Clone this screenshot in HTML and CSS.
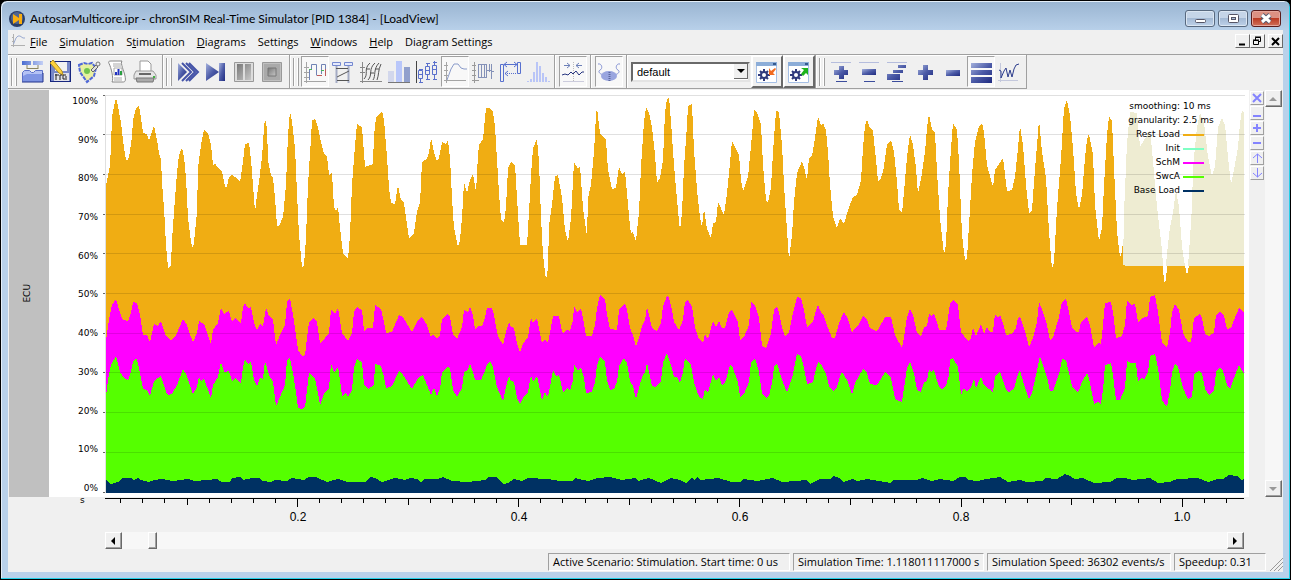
FILE: index.html
```html
<!DOCTYPE html>
<html lang="en">
<head>
    <meta charset="UTF-8">
    <meta name="viewport" content="width=device-width, initial-scale=1.0">
    <title>AutosarMulticore.ipr - chronSIM Real-Time Simulator</title>
    <link rel="stylesheet" href="styles.css">
</head>
<body>

<svg class="defs" width="0" height="0" aria-hidden="true">
    <defs>
        <linearGradient id="blue" x1="0" y1="0" x2="1" y2="1">
            <stop offset="0" stop-color="#a3b0dc"/><stop offset=".5" stop-color="#4d5ca8"/><stop offset="1" stop-color="#1f2b80"/>
        </linearGradient>
        <linearGradient id="gray" x1="0" y1="0" x2="1" y2="1">
            <stop offset="0" stop-color="#777"/><stop offset="1" stop-color="#c8c8c8"/>
        </linearGradient>
        <linearGradient id="sky" x1="0" y1="0" x2="1" y2="0">
            <stop offset="0" stop-color="#4a6cd0"/><stop offset="1" stop-color="#c3cff5"/>
        </linearGradient>
    </defs>
</svg>

<div class="window">
    <header class="titlebar">
        <svg width="16" height="16" viewBox="0 0 16 16"><circle cx="8" cy="8" r="8" fill="#2c3f66"/><circle cx="8" cy="7" r="6" fill="#4f6590"/><path d="M4 3l6 4V3h3v10h-3V9l-6 4z" fill="#f8ae10"/></svg>
        <h1>AutosarMulticore.ipr - chronSIM Real-Time Simulator [PID 1384] - [LoadView]</h1>
        <button class="win-btn" aria-label="Minimize"><svg width="28" height="15"><rect x="9.500" y="8.500" width="10" height="3" rx="1" fill="#fff" stroke="#556"/></svg></button>
        <button class="win-btn" aria-label="Maximize"><svg width="28" height="15"><rect x="9.500" y="3.500" width="10" height="8" rx="1" fill="#fff" stroke="#556"/><rect x="12.500" y="6.500" width="4" height="2" fill="#aabdd6" stroke="#556"/></svg></button>
        <button class="win-btn close" aria-label="Close"><svg width="28" height="15"><path d="M10 4l8 7M18 4l-8 7" stroke="#545a70" stroke-width="5"/><path d="M10 4l8 7M18 4l-8 7" stroke="#fff" stroke-width="3"/></svg></button>
    </header>

    <div class="client">
        <nav class="menubar">
            <svg width="15" height="14" viewBox="0 0 15 14" fill="none"><path d="M2.500 0v13M0 11.500h14M1 3.500h2M1 7.500h2" stroke="#b0b0b0"/><path d="M2.500 10L5 4l2-2h2l3 2h2" stroke="#9aaad0"/></svg>
            <button><u>F</u>ile</button>
            <button><u>S</u>imulation</button>
            <button>S<u>t</u>imulation</button>
            <button><u>D</u>iagrams</button>
            <button>Settings</button>
            <button><u>W</u>indows</button>
            <button><u>H</u>elp</button>
            <button>Diagram Settings</button>
            <span class="spacer"></span>
            <button class="mdi" aria-label="Minimize view"><svg width="12" height="11"><path d="M3 8.500h6" stroke="#000" stroke-width="2"/></svg></button>
            <button class="mdi" aria-label="Restore view"><svg width="12" height="11" fill="none" stroke="#000"><path d="M4.500 4V1.500h5v4H8M4 1h6"/><path d="M2.500 4.500h5v4h-5zM2 4h6"/></svg></button>
            <button class="mdi mdi-close" aria-label="Close view"><svg width="12" height="11"><path d="M3 2l7 7M10 2L3 9" stroke="#000" stroke-width="2"/></svg></button>
        </nav>

        <div class="toolbar">
            <div class="group wide">
                <span class="grip"></span>
                <button class="tool" aria-label="Open project"><svg width="24" height="24"><path d="M1 1h9v4H1zM12 1h10v4H12z" fill="url(#sky)"/><path d="M6 5v4M17 5v4M6 8.500h11" stroke="#8a8460" fill="none"/><path d="M1.500 21.500v-9l2-2h5l2 2h2l2-2h7v11z" fill="#b4c2f4" stroke="#5b70c8"/><path d="M2 22v-6l4-2h16v8z" fill="#7f95e4"/><path d="M1 22h21v-9" fill="none" stroke="#20308c"/></svg></button>
                <button class="tool" aria-label="Save trace"><svg width="24" height="24"><path d="M1 1h21v21H1z" fill="#17267e"/><path d="M2 2h19v19H2z" fill="#7888c8"/><path d="M6 2h12v9H6z" fill="#f2f2f2"/><path d="M5 13h15v8H5z" fill="#e2e2e8"/><path d="M4 0l9 11 1 4-4-2L1 3z" fill="#ffd23c" stroke="#ad8b20"/><path d="M7 14v6M6 15h4M11 20v-5h2M17 15h-3v4h4M16 17h2" fill="none" stroke="#222"/></svg></button>
                <button class="tool" aria-label="Configure"><svg width="24" height="24"><path d="M2 5l5-2 4 1 4-1 4 5-2 8-7 6-7-10z" fill="#eceea0" stroke="#4f68d8" stroke-width="2" stroke-dasharray="4 1"/><circle cx="10" cy="11" r="4" fill="#73c34e" stroke="#dff3a0" stroke-width="2"/><path d="M14 10l5-5 2 2-5 5z" fill="#ddd" stroke="#666"/><circle cx="21" cy="4" r="2" fill="#eee" stroke="#777"/></svg></button>
                <button class="tool" aria-label="Report"><svg width="24" height="24"><path d="M4 3.500C3 1.500 4 1 6 1h11c-2 2 2 10 3 15s0 6-2 6H7c2-3-1-15-3-18.500z" fill="#fff" stroke="#888"/><path d="M8 4h8M8 6h8" stroke="#aaa"/><path d="M9 8h8v7H9z" fill="#fff" stroke="#aaa"/><path d="M11 15v-3" stroke="#2232c0" stroke-width="2"/><path d="M13.500 15V9" stroke="#2232c0" stroke-width="2"/><path d="M16 15v-4" stroke="#28a040" stroke-width="2"/><path d="M9 18h8M9 20h8" stroke="#aaa"/></svg></button>
                <button class="tool" aria-label="Print"><svg width="24" height="24"><path d="M7 12V1h8l3 3v8z" fill="#fff" stroke="#999"/><path d="M3 11h17l3 4v4H1v-4z" fill="#e6e6e6" stroke="#999"/><path d="M3 18h18l-1 4H4z" fill="#aaa" stroke="#777"/><path d="M6 14h12" stroke="#666" stroke-width="2"/><path d="M20 17h2" stroke="#45b045" stroke-width="2"/></svg></button>
            </div>
            <div class="group wide">
                <span class="grip"></span>
                <button class="tool" aria-label="Run"><svg width="24" height="24"><path d="M2 3l9 9-9 9z" fill="url(#blue)"/><path d="M6 3l9 9-9 9M10 3l9 9-9 9M13 3l9 9-9 9" fill="none" stroke="#4554a8" stroke-width="2"/></svg></button>
                <button class="tool" aria-label="Step"><svg width="24" height="24"><path d="M2 3l13 9-13 9z" fill="url(#blue)"/><path d="M15 3h6v18h-6z" fill="url(#blue)"/></svg></button>
                <button class="tool" aria-label="Pause"><svg width="24" height="24"><path d="M2.500 2.500h19v19h-19z" fill="#ddd" stroke="#999"/><path d="M5 4h6v16H5zM13 4h6v16h-6z" fill="url(#gray)"/></svg></button>
                <button class="tool" aria-label="Stop"><svg width="24" height="24"><path d="M2.500 2.500h19v19h-19z" fill="#c0c0c0" stroke="#999"/><path d="M4 4h16v16H4z" fill="#aaa"/><path d="M8 8h8v8H8z" fill="url(#gray)" stroke="#777"/></svg></button>
            </div>
            <div class="group">
                <span class="grip"></span>
                <button class="tool pressed" aria-label="State diagram"><svg width="24" height="24" fill="none"><path d="M3.500 2v21M1 21.500h22M1 7.500h5M1 12.500h5M1 17.500h5" stroke="#a5a5a5"/><path d="M6.500 20V9.500h2v-5h5v11M18.500 14V4.500h4V9" stroke="#7183b5"/><path d="M14 15.500h5M22.500 9v7" stroke="#bd5c5c"/><path d="M6 9.500h3M18 10.500h3" stroke="#49b35a"/></svg></button>
                <button class="tool" aria-label="Sequence diagram"><svg width="24" height="24" fill="none"><path d="M1.500 2.500h8v3h-8zM13.500 2.500h8v3h-8z" stroke="#7488d0" fill="#e4e9fc"/><path d="M5.500 6v17M17.500 6v17" stroke="#a4abc4" stroke-width="2"/><path d="M5 8.500h12M6 17l12-6M6 20.500h12" stroke="#555"/></svg></button>
                <button class="tool" aria-label="Trace diagram"><svg width="24" height="24" fill="none"><path d="M3.500 2v21M1 21.500h22M1 7.500h5M1 12.500h5" stroke="#888"/><path d="M5 19c5-5-1-10 6-16M9 20c5-5 0-11 7-17M14 20c3-4 0-11 6-17M18 20c2-5 1-10 4-16M7 9h4M11 13h4M16 9h4" stroke="#555"/></svg></button>
                <button class="tool" aria-label="Histogram"><svg width="24" height="24"><path d="M1 11h6v11H1z" fill="#d2d7ec"/><path d="M9 1h6v21H9z" fill="#b9c7fa"/><path d="M17 7h6v15h-6z" fill="#91a0cd"/><path d="M1 22.500h22" stroke="#777"/></svg></button>
                <button class="tool" aria-label="Box plot"><svg width="24" height="24" fill="none"><path d="M1.500 1v22" stroke="#444"/><path d="M5.500 10v-1M5.500 19v3M12.500 3v3M12.500 14v6M19.500 1v4M19.500 15v4M4 9.500h4M4 22.500h4M11 3.500h4M11 19.500h4M18 2.500h4M18 19.500h4M3.500 10.500h4v8h-4zM3.500 14.500h4M10.500 6.500h4v8h-4zM10.500 10.500h4M17.500 5.500h4v9h-4zM17.500 9.500h4" stroke="#5a70cc"/></svg></button>
                <button class="tool pressed" aria-label="Load view"><svg width="24" height="24" fill="none"><path d="M3.500 2v21M1 20.500h22M1 5.500h4M1 10.500h4M1 15.500h4" stroke="#a5a5a5"/><path d="M4 20l4-11 3-5h4l3 4 3 1h3" stroke="#8a9bca"/></svg></button>
                <button class="tool" aria-label="Gantt diagram"><svg width="24" height="24" fill="none"><path d="M3.500 2v21M1 20.500h7M1 5.500h4M1 10.500h4M1 15.500h4" stroke="#999"/><path d="M7 4.500h9M7 17.500h9M7.500 4v14M10.500 4v13M13.500 4v13M15.500 4v14M18.500 4v8M20.500 12v5M16 10.500h4M20.500 4v15M20 11.500h3" stroke="#8491b8"/></svg></button>
                <button class="tool" aria-label="Event chain"><svg width="24" height="24" fill="none"><path d="M1.500 4.500h3v17h-3zM18.500 2.500h3v11h-3z" stroke="#5770cf"/><path d="M5 4.500h13M8 2L5 4.500 8 7M15 2l3 2.500L15 7" stroke="#5770cf"/><path d="M6 13.500h12" stroke="#5770cf" stroke-dasharray="1 1"/><path d="M9 11l-3 2.500L9 16" stroke="#5770cf"/></svg></button>
                <button class="tool" aria-label="Distribution"><svg width="24" height="24"><path d="M0 21h2v1H0zM3 19h2v3H3zM6 12h2v10H6zM9 2h2v20H9zM12 6h2v16h-2zM15 13h2v9h-2zM18 17h2v5h-2zM21 21h2v1h-2z" fill="#b9c5f7"/></svg></button>
            </div>
            <div class="group single">
                <button class="tool pressed" aria-label="Smoothing"><svg width="24" height="24" fill="none"><path d="M3 5.500h6M6 3l3 2.500L6 8M21 5.500h-6M18 3l-3 2.500L18 8" stroke="#6d80b8"/><path d="M12.500 2v20" stroke="#bbb" stroke-dasharray="1 1"/><path d="M1 15l3-1 3 1 3-3 2 2 3-3 3 4 3-3h2" stroke="#26347f"/><path d="M2 21.500h21" stroke="#ccd"/></svg></button>
            </div>
            <div class="group single">
                <button class="tool pressed" aria-label="Debugger"><svg width="24" height="24" fill="none"><path d="M1 4c4-1 5 5 2 6-3 2 1 5 5 5M23 4c-4-1-5 5-2 6 3 2-1 5-5 5" stroke="#8593d4"/><ellipse cx="12" cy="16" rx="8" ry="5" fill="#99a5df"/><path d="M12.500 12v9" stroke="#5c689f" stroke-width="2" stroke-dasharray="1 1"/></svg></button>
            </div>
            <div class="group combo">
                <label class="picker"><select aria-label="Layout"><option>default</option></select><svg width="14" height="15"><path d="M3 5h8L7 9z" fill="#000"/></svg></label>
                <button class="tool raised" aria-label="Load layout"><svg width="24" height="24"><path d="M1.500 2.500h20v20h-20z" fill="#fff" stroke="#a5bfe5"/><path d="M1 2h21v4H1z" fill="#8cadd8"/><path d="M18 3h3v2h-3z" fill="#355a8e"/><path d="M9 9v12M3 15h12M5 11l8 8M13 11l-8 8" stroke="#303a7c" stroke-width="2"/><circle cx="9" cy="15" r="3" fill="#fff" stroke="#303a7c" stroke-width="2"/><path d="M14 8v7h6l-2-2 3-4-1-1-4 3z" fill="#f26a1e"/></svg></button>
                <button class="tool raised" aria-label="Save layout"><svg width="24" height="24"><path d="M1.500 2.500h20v20h-20z" fill="#fff" stroke="#a5bfe5"/><path d="M1 2h21v4H1z" fill="#8cadd8"/><path d="M18 3h3v2h-3z" fill="#355a8e"/><path d="M9 9v12M3 15h12M5 11l8 8M13 11l-8 8" stroke="#303a7c" stroke-width="2"/><circle cx="9" cy="15" r="3" fill="#fff" stroke="#303a7c" stroke-width="2"/><path d="M14 8h7v7l-2-2-3 3-2-2 3-4z" fill="#1cb31c"/></svg></button>
            </div>
            <div class="group wide">
                <span class="grip"></span>
                <button class="tool" aria-label="Zoom in rows"><svg width="24" height="24"><path d="M2 2.500h20" stroke="#b5bddd"/><path d="M10 6h5v4h4v5h-4v4h-5v-4H5v-5h5z" fill="url(#blue)"/><path d="M7 21.500h11" stroke="#3b4c9c"/></svg></button>
                <button class="tool" aria-label="Zoom out rows"><svg width="24" height="24"><path d="M2 2.500h20" stroke="#b5bddd"/><path d="M5 9h14v6H5z" fill="url(#blue)"/><path d="M7 21.500h11" stroke="#3b4c9c"/></svg></button>
                <button class="tool" aria-label="Fit rows"><svg width="24" height="24"><path d="M2 2.500h20" stroke="#b5bddd"/><path d="M13 5h8v3h-8zM8 10h10v3H8zM2 14h13v6H2z" fill="url(#blue)"/><path d="M7 21.500h11" stroke="#3b4c9c"/></svg></button>
                <button class="tool" aria-label="Zoom in"><svg width="24" height="24"><path d="M10 5h5v5h5v5h-5v5h-5v-5H5v-5h5z" fill="url(#blue)"/></svg></button>
                <button class="tool" aria-label="Zoom out"><svg width="24" height="24"><path d="M5 10h14v6H5z" fill="url(#blue)"/></svg></button>
                <button class="tool pressed" aria-label="Stacked"><svg width="24" height="24"><path d="M2 3h21v5H2zM2 10h21v5H2zM2 17h21v6H2z" fill="url(#blue)"/></svg></button>
                <button class="tool" aria-label="Lines"><svg width="24" height="24" fill="none"><path d="M3.500 3v19M1 20.500h20" stroke="#c4c8dc"/><path d="M2 10l2 1v7l3-7 2-3 2 9 2-7 2 7 2-8 2-4 3-1" stroke="#2c3c8c"/></svg></button>
            </div>
        </div>

        <main class="view">
            <div class="strip"><span>ECU</span></div>
            <div class="ylabels">
                <span>100%</span><span>90%</span><span>80%</span><span>70%</span><span>60%</span><span>50%</span><span>40%</span><span>30%</span><span>20%</span><span>10%</span><span>0%</span>
            </div>
            <div class="plot">
                <svg viewBox="102 90 1147 407" preserveAspectRatio="none" shape-rendering="crispEdges">
                    <!-- Rest Load -->
                    <path fill="#f0ad13" d="M106 493V186L110 165 111 145 112 117 114 106 116 98 118 106 121 123 123 140 125 155 127 161 129 157 132 137 133 120 136 108 139 106 141 118 143 133 147 134 149 141 152 132 154 125 157 140 159 153 161 160 162 182 164 208 166 245 168 268 171 265 172 240 175 198 177 173 179 155 182 148 184 157 186 178 188 218 191 242 193 249 194 242 197 212 198 168 201 145 204 130 208 133 211 145 213 165 215 163 218 168 222 171 225 187 227 187 229 177 232 175 237 178 240 182 243 162 245 144 249 143 251 160 253 185 255 212 257 195 259 182 262 157 264 128 265 118 267 128 268 160 271 175 273 178 275 198 277 226 279 226 283 217 286 185 288 135 290 111 292 121 295 148 297 193 299 235 302 267 304 265 306 238 308 185 311 138 312 120 315 119 318 127 321 142 324 154 327 156 329 175 332 173 334 207 336 211 338 207 340 228 343 253 348 259 350 235 352 185 355 145 357 124 362 127 365 167 373 164 374 135 376 118 382 111 384 120 387 157 389 188 391 203 395 204 398 185 401 200 404 203 407 225 409 238 414 233 417 212 420 203 422 162 427 159 429 153 431 138 434 152 437 161 439 158 442 142 446 144 448 140 450 158 452 198 454 228 458 247 460 240 462 218 464 182 467 193 470 180 473 174 476 192 478 155 479 145 483 139 486 108 490 108 493 112 495 127 497 160 499 193 501 219 504 223 506 207 508 168 511 162 515 165 517 198 520 245 527 245 529 212 531 175 533 148 537 139 539 162 541 218 543 255 546 280 548 268 549 225 552 205 555 176 558 175 562 198 565 230 568 242 571 218 574 162 578 169 580 166 583 208 587 236 588 198 591 185 594 152 596 115 597 108 600 133 606 140 608 170 612 189 616 188 619 167 622 174 625 172 627 193 630 227 631 233 633 232 636 241 639 212 641 167 644 122 646 107 649 113 652 127 655 155 657 183 660 178 663 160 665 112 667 99 669 97 671 122 674 165 677 200 680 231 682 212 684 167 687 125 688 106 692 104 694 150 697 190 700 217 702 227 704 209 707 229 711 238 713 223 716 222 718 202 724 215 727 193 730 163 732 141 739 155 741 180 743 191 748 177 752 135 754 110 757 112 761 125 763 165 766 200 768 203 771 187 773 152 776 111 779 112 782 145 784 185 786 215 789 260 792 235 794 202 797 173 802 161 804 167 807 180 809 158 812 156 815 138 818 116 821 125 823 123 826 130 828 152 830 185 833 216 837 228 840 218 844 224 848 210 853 197 857 195 861 180 863 148 865 125 867 120 870 128 873 131 876 160 878 181 880 180 883 172 887 145 891 140 894 152 897 182 899 210 902 213 904 192 907 157 910 134 913 145 916 168 918 194 922 173 925 152 927 128 929 114 932 130 935 133 937 172 940 218 944 255 946 245 948 195 951 148 953 123 957 130 959 162 962 235 965 260 967 259 969 225 972 175 975 142 979 126 982 123 984 132 987 165 993 187 995 170 1003 158 1007 191 1012 190 1015 177 1018 148 1020 126 1023 145 1026 185 1029 213 1032 210 1034 182 1037 145 1039 120 1042 152 1046 178 1049 232 1052 269 1054 262 1057 208 1061 158 1064 108 1067 100 1070 115 1073 148 1076 193 1079 210 1082 195 1085 158 1087 139 1089 134 1093 155 1095 205 1099 241 1102 228 1104 185 1107 135 1109 116 1112 121 1114 168 1117 232 1120 257 1122 252 1123 241V264L1126 266H1163L1164 283 1166 280 1167 266H1185L1187 275 1189 266H1244V493Z"/>
                    <path fill="#eeecd2" d="M1123 265L1124 213 1127 143 1130 112 1137 113 1140 147 1150 130 1152 150 1157 207 1162 250 1163 266H1126ZM1166 266L1167 253 1170 227 1173 213 1176 190 1179 207 1182 247 1185 266ZM1188 266L1189 253 1192 207 1193 167 1197 127 1200 113 1204 123 1208 157 1212 176 1215 167 1218 127 1222 118 1225 125 1228 157 1231 185 1234 170 1238 147 1240 123 1242 110 1244 113V266Z"/>
                    <!-- SchM -->
                    <path fill="#f0f" d="M106 493V340L109 320 112 305 116 299 120 313 123 320 128 321 131 313 133 302 137 303 140 315 143 335 147 335 150 342 154 324 158 326 161 321 163 327 166 336 171 340 176 335 183 319 187 325 191 337 193 342 197 333 199 321 204 324 207 332 211 344 213 330 218 323 221 308 224 314 229 311 232 322 235 318 241 323 243 307 245 303 248 308 251 307 254 323 257 330 260 324 263 326 266 308 269 316 273 320 276 345 280 335 285 325 287 302 290 298 293 315 296 335 298 350 302 356 305 355 307 338 309 322 313 318 317 322 320 344 325 338 329 333 331 309 335 314 338 308 342 333 348 341 352 333 354 312 357 307 362 310 364 331 368 328 373 328 375 305 381 309 384 322 386 333 392 332 399 315 403 317 412 332 418 320 422 317 427 325 431 337 433 334 437 339 440 335 442 319 447 314 450 317 453 335 457 339 462 327 464 310 468 312 470 307 473 315 475 330 478 326 482 326 485 318 487 308 492 308 494 315 497 332 499 338 503 345 506 332 509 322 511 327 514 328 517 343 520 352 523 344 528 337 531 318 533 323 537 318 539 328 542 343 545 339 548 343 551 327 553 316 559 316 561 327 563 333 567 330 570 331 573 320 574 306 577 312 581 308 583 318 586 336 592 336 595 325 597 308 600 295 605 299 607 315 610 329 617 330 619 310 625 303 627 310 630 328 633 335 636 347 639 338 642 326 645 320 647 307 649 315 652 328 657 331 661 323 663 306 667 296 669 298 672 310 674 322 679 330 683 320 685 302 688 300 692 307 695 327 698 337 703 343 705 334 708 339 713 321 716 327 719 321 722 328 725 328 729 312 732 310 738 322 740 340 744 337 749 325 751 302 755 305 759 318 762 346 766 348 768 343 771 333 774 310 777 306 779 313 782 327 785 336 789 332 793 313 797 297 801 298 804 310 807 327 813 322 816 310 818 305 821 312 824 316 828 328 832 338 835 338 839 323 844 312 848 319 852 333 855 328 858 326 863 316 867 320 870 328 876 331 878 330 885 317 891 317 895 335 902 348 904 337 907 317 910 309 913 315 917 333 921 337 924 327 927 326 929 314 932 316 934 313 937 322 939 330 946 330 948 318 950 303 954 300 958 305 961 332 968 341 971 338 973 327 976 336 981 324 984 334 987 327 990 332 993 332 995 314 998 318 1000 315 1003 323 1006 335 1012 334 1016 328 1018 318 1020 317 1023 325 1026 335 1029 347 1033 338 1037 322 1039 302 1043 312 1047 325 1050 340 1053 338 1056 327 1059 317 1062 302 1066 299 1069 312 1072 327 1076 332 1079 332 1081 322 1087 317 1090 325 1094 348 1098 343 1101 344 1103 325 1105 303 1111 302 1113 312 1116 338 1122 336 1125 325 1127 300 1131 305 1135 304 1138 322 1142 318 1148 316 1150 297 1155 295 1158 312 1162 343 1167 348 1170 333 1172 312 1175 304 1179 310 1183 333 1188 342 1191 342 1194 318 1200 314 1202 318 1205 334 1209 336 1214 333 1216 315 1220 312 1224 316 1227 329 1231 328 1234 320 1239 308 1244 313V493Z"/>
                    <!-- SwcA -->
                    <path fill="#5f0" d="M106 493V396L108 380 111 365 116 356 120 372 124 378 128 380 131 372 133 362 136 358 138 363 141 378 143 389 147 390 150 396 154 381 161 376 163 382 166 392 168 395 172 394 177 385 183 369 187 376 193 394 197 387 199 377 201 381 204 379 207 387 211 398 213 385 218 377 221 362 224 372 229 371 232 381 235 378 241 383 243 367 245 359 248 364 251 362 254 380 257 386 260 378 263 379 265 361 269 375 273 382 276 406 280 397 285 385 287 360 290 358 293 373 296 392 298 408 302 409 305 407 307 390 309 373 315 379 318 393 320 405 324 394 329 388 331 363 334 373 338 367 340 380 342 396 346 393 348 397 352 390 354 368 357 359 362 362 364 384 368 389 374 385 375 364 381 366 384 377 386 388 392 386 399 371 403 375 412 389 418 378 423 375 427 385 431 395 434 388 437 396 440 389 442 372 447 367 450 368 453 390 457 397 462 388 464 372 468 370 470 363 473 372 475 380 481 380 484 373 487 365 490 361 493 367 497 387 499 392 503 401 506 387 509 376 511 381 514 382 517 398 520 404 523 398 528 392 531 375 533 382 537 376 539 385 542 401 545 392 548 397 551 381 553 370 556 376 559 375 563 392 567 388 570 391 573 380 574 364 578 371 581 367 584 378 586 393 592 392 595 382 597 365 600 357 605 362 607 380 610 390 614 389 617 382 619 366 624 358 627 363 630 381 633 386 636 399 639 388 642 377 645 372 647 363 649 372 652 386 656 387 661 381 663 362 667 353 671 365 674 377 677 377 680 383 683 372 685 358 688 362 691 365 694 382 697 392 700 398 703 399 705 389 708 393 713 374 716 381 719 377 722 385 725 383 730 365 732 366 738 382 740 397 744 394 749 382 751 362 755 358 759 372 762 393 766 398 769 396 772 383 774 367 777 363 779 370 783 383 787 392 792 378 797 354 801 356 804 368 807 384 813 382 816 369 818 362 822 366 826 374 829 386 833 391 837 387 841 373 843 373 848 382 852 395 855 383 863 369 867 373 870 384 876 385 878 384 885 372 891 378 895 399 902 402 904 388 907 368 910 362 914 373 917 390 921 392 924 382 927 381 929 369 931 372 934 370 939 387 942 389 946 386 949 375 950 359 953 358 958 367 961 395 964 388 967 392 971 387 974 379 976 388 981 377 984 385 993 392 995 376 1000 371 1006 390 1009 392 1014 389 1017 377 1020 370 1024 385 1029 399 1032 393 1036 375 1040 356 1043 365 1047 377 1050 391 1053 391 1057 380 1060 370 1062 359 1066 360 1069 373 1072 386 1077 392 1079 391 1082 382 1087 373 1089 378 1094 404 1098 402 1101 404 1103 390 1105 365 1111 363 1113 375 1116 400 1120 400 1125 388 1127 361 1131 363 1136 363 1138 381 1142 378 1144 380 1148 372 1150 356 1155 354 1158 368 1162 400 1167 407 1170 390 1172 373 1175 364 1178 367 1183 388 1188 399 1192 397 1194 374 1199 371 1202 373 1205 389 1209 395 1214 391 1216 372 1220 367 1223 371 1227 385 1230 389 1234 378 1239 365 1244 374V493Z"/>
                    <!-- Base Load -->
                    <path fill="#003163" d="M106 493V480L111 484 118 482 123 478 131 478 134 480 138 478 141 480 149 482 154 480 162 479 173 481 188 479 195 481 217 479 222 482 230 482 232 478 240 477 243 480 252 478 259 478 263 481 271 482 275 480 287 481 292 478 304 480 309 477 316 477 327 482 338 479 348 482 365 482 371 477 375 478 382 482 395 478 405 480 410 478 417 479 421 482 425 479 438 479 443 477 452 481 467 482 485 480 488 477 496 477 503 484 508 483 514 479 522 481 528 478 548 479 560 481 572 481 575 478 588 481 597 478 610 477 622 480 635 478 638 481 649 478 661 483 671 478 680 480 686 483 692 478 694 480 697 477 701 480 718 478 732 482 740 482 744 479 757 481 773 478 782 482 795 481 806 480 810 484 820 479 830 479 833 476 839 478 843 482 853 479 857 481 867 479 873 480 891 483 893 480 917 480 922 478 932 481 940 479 953 481 960 477 965 477 968 480 978 481 986 479 1000 477 1008 482 1020 480 1026 482 1043 481 1045 478 1057 479 1065 474 1070 476 1075 479 1083 478 1094 483 1110 482 1117 478 1125 478 1133 480 1150 478 1158 483 1170 482 1177 479 1198 478 1208 482 1217 479 1223 479 1229 475 1237 476 1242 480 1244 479V493Z"/>
                    <!-- grid -->
                    <path fill="#000" fill-opacity=".12" d="M105 95h1140v1H105zM105 96h1v397h-1zM106 134h1139v1H106zM106 174h1139v1H106zM106 214h1139v1H106zM106 253h1139v1H106zM106 293h1139v1H106zM106 333h1139v1H106zM106 372h1139v1H106zM106 412h1139v1H106zM106 452h1139v1H106z"/>
                    <path fill="#666" d="M103 95h2v1h-2zM103 134h2v1h-2zM103 174h2v1h-2zM103 214h2v1h-2zM103 253h2v1h-2zM103 293h2v1h-2zM103 333h2v1h-2zM103 372h2v1h-2zM103 412h2v1h-2zM103 452h2v1h-2zM103 492h2v1h-2z"/>
                </svg>
                <dl class="legend">
                    <dt>smoothing:</dt><dd>10 ms</dd>
                    <dt>granularity:</dt><dd>2.5 ms</dd>
                    <dt>Rest Load</dt><dd class="key rest"></dd>
                    <dt>Init</dt><dd class="key init"></dd>
                    <dt>SchM</dt><dd class="key schm"></dd>
                    <dt>SwcA</dt><dd class="key swca"></dd>
                    <dt>Base Load</dt><dd class="key base"></dd>
                </dl>
            </div>
            <div class="zoombar">
                <button aria-label="Fit"><svg width="12" height="12"><path d="M2 2l8 8M10 2l-8 8" stroke="#8484ff" stroke-width="2"/></svg></button>
                <button aria-label="Baseline"><svg width="12" height="12"><path d="M2 9h8" stroke="#8484ff" stroke-width="2"/></svg></button>
                <button aria-label="Zoom in"><svg width="12" height="12"><path d="M2 6h8M6 2v8" stroke="#8484ff" stroke-width="2"/></svg></button>
                <button aria-label="Zoom out"><svg width="12" height="12"><path d="M2 6h8" stroke="#8484ff" stroke-width="2"/></svg></button>
                <button aria-label="Up"><svg width="12" height="12" fill="none" stroke="#8484ff"><path d="M6.500 2v9M2 6l4.500-4L11 6" /></svg></button>
                <button aria-label="Down"><svg width="12" height="12" fill="none" stroke="#8484ff"><path d="M6.500 1v9M2 6l4.500 4L11 6"/></svg></button>
            </div>
            <div class="vscroll">
                <button aria-label="Scroll up"><svg width="14" height="14"><path d="M3 9h8L7 5z" fill="#999"/></svg></button>
                <button aria-label="Scroll down"><svg width="14" height="14"><path d="M3 5h8L7 9z" fill="#999"/></svg></button>
            </div>
        </main>

        <div class="timeline">
            <span class="unit">s</span>
            <svg viewBox="0 0 1139 10" preserveAspectRatio="none" shape-rendering="crispEdges"><path d="M0 1h1139v1H0zM15 2h1v4h-1zM37 2h1v4h-1zM59 2h1v4h-1zM82 2h1v6h-1zM104 2h1v4h-1zM126 2h1v4h-1zM148 2h1v4h-1zM170 2h1v4h-1zM192 2h1v8h-1zM214 2h1v4h-1zM236 2h1v4h-1zM258 2h1v4h-1zM280 2h1v4h-1zM303 2h1v6h-1zM325 2h1v4h-1zM347 2h1v4h-1zM369 2h1v4h-1zM391 2h1v4h-1zM413 2h1v8h-1zM435 2h1v4h-1zM457 2h1v4h-1zM480 2h1v4h-1zM502 2h1v4h-1zM524 2h1v6h-1zM546 2h1v4h-1zM568 2h1v4h-1zM590 2h1v4h-1zM612 2h1v4h-1zM634 2h1v8h-1zM657 2h1v4h-1zM679 2h1v4h-1zM701 2h1v4h-1zM723 2h1v4h-1zM745 2h1v6h-1zM767 2h1v4h-1zM789 2h1v4h-1zM811 2h1v4h-1zM834 2h1v4h-1zM856 2h1v8h-1zM878 2h1v4h-1zM900 2h1v4h-1zM922 2h1v4h-1zM944 2h1v4h-1zM966 2h1v6h-1zM988 2h1v4h-1zM1010 2h1v4h-1zM1033 2h1v4h-1zM1055 2h1v4h-1zM1077 2h1v8h-1zM1099 2h1v4h-1zM1121 2h1v4h-1z"/></svg>
            <div class="times"><span>0.2</span><span>0.4</span><span>0.6</span><span>0.8</span><span>1.0</span></div>
        </div>

        <div class="hscroll">
            <button aria-label="Scroll left"><svg width="14" height="14"><path d="M9 3v8L5 7z"/></svg></button>
            <button class="thumb" aria-label="Scroll thumb"></button>
            <span class="spacer"></span>
            <button aria-label="Scroll right"><svg width="14" height="14"><path d="M5 3v8l4-4z"/></svg></button>
        </div>

        <footer class="statusbar">
            <span class="panel scenario">Active Scenario: Stimulation. Start time: 0 us</span>
            <span class="panel time">Simulation Time: 1.118011117000 s</span>
            <span class="panel speed">Simulation Speed: 36302 events/s</span>
            <span class="panel speedup">Speedup: 0.31</span>
            <svg width="13" height="13" stroke="#999"><path d="M0 13L13 0M4 13l9-9M8 13l5-5"/></svg>
        </footer>
    </div>
</div>

</body>
</html>
```
FILE: styles.css
```css
* {
    box-sizing: border-box;
}

body {
    margin: 0;
    background: #000;
    font-family: "Open Sans", sans-serif;
    font-size: 11px;
    color: #000;
}

button {
    margin: 0;
    padding: 0;
    border: none;
    background: none;
    font: inherit;
    color: inherit;
}

svg {
    display: block;
}

.defs {
    position: absolute;
}

.spacer {
    flex: 1;
}

.window {
    display: flex;
    flex-direction: column;
    height: 100vh;
    padding: 0 7px 7px;
    border: 1px solid #000;
    border-radius: 7px 7px 0 0;
    background: linear-gradient(#99b4d1, #b9d1ea 30px);
    box-shadow: inset -1px -1px #24d0e8, inset 1px 1px #e4eef8;
}

.titlebar {
    display: flex;
    align-items: center;
    gap: 3px;
    height: 29px;
    padding: 6px 2px 0 1px;
}

.titlebar h1 {
    flex: 1;
    margin: 0 0 0 2px;
    font: 12px/16px Lato, "Open Sans", sans-serif;
}

.win-btn {
    width: 30px;
    height: 17px;
    border: 1px solid #58697f;
    border-radius: 3px;
    background: linear-gradient(#c5d5e8 50%, #a4bad5 50%, #bdd1e8);
    box-shadow: inset 0 0 0 1px #dbe6f2;
}

.win-btn.close {
    border-color: #5a1c1c;
    background: linear-gradient(#dc9183 50%, #bb3c24 50%, #d0705a);
    box-shadow: inset 0 0 0 1px #e5a79c;
}

.client {
    display: flex;
    flex-direction: column;
    flex: 1;
    min-height: 0;
    background: #f0f0f0;
}

/* menu */
.menubar {
    display: flex;
    align-items: center;
    gap: 12px;
    height: 25px;
    padding: 0 0 2px 3px;
    border-bottom: 1px solid #a0a0a0;
}

.menubar svg + button {
    margin-left: -8px;
}

.mdi {
    width: 15px;
    height: 14px;
    margin-left: -12px;
    border: 1px solid;
    border-color: #fff #696969 #696969 #fff;
}

.mdi-close {
    margin-left: -9px;
}

/* toolbar */
.toolbar {
    display: flex;
    align-self: flex-start;
    height: 34px;
    margin-bottom: 1px;
    border-bottom: 1px solid #a0a0a0;
}

.group {
    display: flex;
    align-items: center;
    padding: 0 1px 0 2px;
    border-right: 1px solid #a0a0a0;
    box-shadow: inset 1px 1px #fff;
}

.wide {
    padding-right: 3px;
}

.grip {
    width: 6px;
    height: 28px;
    margin: 0 2px 0 1px;
    border: solid #a0a0a0;
    border-width: 0 1px;
    box-shadow: inset 1px 0 #fff, inset -1px 0 #fff;
}

.tool {
    width: 28px;
    height: 31px;
    padding: 2px;
}

.single {
    padding: 0 3px 0 4px;
}

.pressed {
    border: 1px solid;
    border-color: #a0a0a0 #fff #fff #a0a0a0;
    background: #f8f8f8;
    padding: 1px;
}

.raised {
    width: 32px;
    height: 33px;
    border: 2px solid;
    border-color: #fff #696969 #696969 #fff;
}

.combo {
    padding: 0 0 0 4px;
}

.picker {
    position: relative;
    width: 119px;
    margin-right: 1px;
}

.picker select {
    display: block;
    width: 100%;
    height: 20px;
    padding: 0 4px;
    border: 2px solid;
    border-color: #696969 #e3e3e3 #e3e3e3 #696969;
    border-radius: 0;
    background: #fff;
    color: #000;
    font: 11px "Liberation Sans", sans-serif;
    appearance: none;
}

.picker svg {
    position: absolute;
    top: 2px;
    right: 2px;
    border-right: 1px solid #696969;
    border-bottom: 1px solid #696969;
    background: #f0f0f0;
    pointer-events: none;
}

/* load view */
.view {
    display: flex;
    flex: 1;
    min-height: 0;
    padding: 0 1px;
    font: 9px/12px "DejaVu Sans", sans-serif;
}

.strip {
    display: flex;
    align-items: center;
    justify-content: center;
    width: 40px;
    padding-right: 4px;
    background: #c0c0c0;
}

.strip span {
    writing-mode: vertical-rl;
    rotate: 180deg;
}

.ylabels {
    display: flex;
    flex-direction: column;
    justify-content: space-between;
    width: 53px;
    padding: 5px 4px 3px 0;
    background: #fff;
    text-align: right;
}

.plot {
    position: relative;
    flex: 1;
    background: #fff;
}

.plot > svg {
    width: 100%;
    height: 100%;
}

.legend {
    position: absolute;
    top: 9px;
    right: 34px;
    display: grid;
    grid-template-columns: auto 32px;
    column-gap: 3px;
    margin: 0;
    line-height: 14px;
    text-align: right;
    white-space: nowrap;
}

.legend dd {
    margin: 0;
    text-align: left;
}

.key::before {
    content: "";
    display: block;
    width: 21px;
    height: 2px;
    margin-top: 7px;
    background: currentColor;
}

.rest {
    color: #f0ad13;
}

.init {
    color: #7fffc4;
}

.schm {
    color: #f0f;
}

.swca {
    color: #5f0;
}

.base {
    color: #003163;
}

.zoombar {
    display: flex;
    flex-direction: column;
    gap: 1px;
    width: 16px;
    padding: 1px 1px 0;
}

.zoombar button {
    width: 14px;
    height: 14px;
    border: 1px solid;
    border-color: #fff #a0a0a0 #a0a0a0 #fff;
}

.vscroll {
    display: flex;
    flex-direction: column;
    justify-content: space-between;
    width: 17px;
    background: #f7f7f7;
}

.vscroll button,
.hscroll button {
    width: 17px;
    height: 17px;
    border: 1px solid;
    border-color: #fff #696969 #696969 #fff;
    background: #f0f0f0;
    box-shadow: inset -1px -1px #a0a0a0;
}

/* time axis */
.timeline {
    position: relative;
    height: 35px;
    padding: 0 39px 0 97px;
}

.timeline svg {
    width: 100%;
    height: 10px;
}

.unit {
    position: absolute;
    top: -3px;
    left: 72px;
    font: 9px/12px "DejaVu Sans", sans-serif;
}

.times {
    display: flex;
    justify-content: space-between;
    padding: 2px 52px 0 183px;
    font: 12px/16px "Liberation Sans", sans-serif;
}

.times span {
    width: 20px;
    text-align: center;
}

.hscroll {
    display: flex;
    height: 17px;
    margin: 0 39px 0 97px;
    background: #f7f7f7;
}

.hscroll .thumb {
    width: 9px;
    margin-left: 26px;
}

/* status bar */
.statusbar {
    display: flex;
    justify-content: flex-end;
    align-items: flex-end;
    gap: 3px;
    height: 23px;
    padding-bottom: 1px;
}

.panel {
    height: 18px;
    padding-left: 4px;
    border: 1px solid;
    border-color: #a0a0a0 #fff #fff #a0a0a0;
    line-height: 16px;
    white-space: nowrap;
}

.scenario {
    width: 242px;
}

.time {
    width: 191px;
}

.speed {
    width: 184px;
}

.speedup {
    width: 92px;
}

.statusbar svg {
    margin-left: 1px;
}
```
